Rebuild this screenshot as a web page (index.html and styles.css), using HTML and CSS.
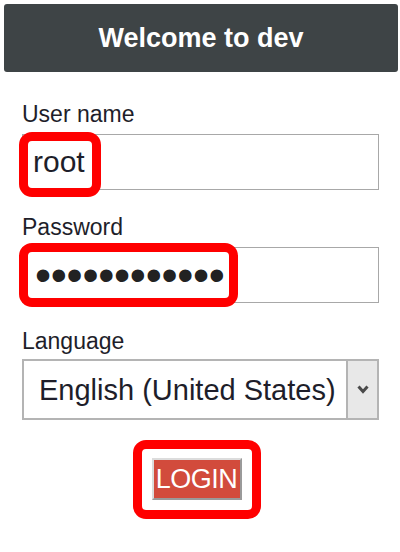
FILE: index.html
```html
<!DOCTYPE html>
<html>

<head>
    <meta charset="utf-8" />
    <title>Login</title>
    <link rel="stylesheet" href="styles.css">
</head>

<body>
    <div class="header">Welcome to dev</div>

    <form class="login">
        <div class="field field-user">
            <label for="user">User name</label>
            <div class="box">
                <input id="user" type="text" value="root">
                <span class="mark mark-user"></span>
            </div>
        </div>

        <div class="field field-pass">
            <label for="pass">Password</label>
            <div class="box">
                <input id="pass" class="pass" type="password" value="abcdefghijkl">
                <span class="mark mark-pass"></span>
            </div>
        </div>

        <div class="field field-lang">
            <label for="lang">Language</label>
            <div class="select">
                <select id="lang">
                    <option>English (United States)</option>
                </select>
                <span class="arrow">
                    <svg width="12" height="9" viewBox="0 0 12 9">
                        <polyline points="1.5,1.5 6,6.5 10.5,1.5" fill="none" stroke="#4a4a4a" stroke-width="3" />
                    </svg>
                </span>
            </div>
        </div>

        <div class="submit">
            <div class="mark-btn">
                <button type="button">LOGIN</button>
            </div>
        </div>
    </form>
</body>

</html>
```

FILE: styles.css
```css
body,
form,
label,
input,
select,
button {
    margin: 0;
    padding: 0;
}

body {
    background: #fff;
    font-family: "Liberation Sans", Arial, sans-serif;
    color: #1e1e2a;
}

.header {
    display: flex;
    align-items: center;
    justify-content: center;
    height: 68px;
    margin: 4px 2px 0 4px;
    background: #3e4446;
    border-radius: 3px;
    color: #fff;
    font-size: 27px;
    font-weight: bold;
}

.login {
    padding: 29px 21px 0 22px;
}

.field label {
    display: block;
    font-size: 23px;
    line-height: 26px;
    margin-bottom: 7px;
}

.field-user {
    margin-bottom: 24px;
}

.field-pass {
    margin-bottom: 25px;
}

.field-lang label {
    margin-bottom: 5px;
}

.box {
    position: relative;
}

.box input {
    display: block;
    box-sizing: border-box;
    width: 100%;
    height: 56px;
    border: 1px solid #a8a8a8;
    padding: 0 10px;
    font-family: "Liberation Sans", Arial, sans-serif;
    font-size: 30px;
    color: #1e1e2a;
    outline: none;
}

.box .pass {
    font-size: 46px;
    line-height: 60px;
    letter-spacing: -0.3px;
    padding-left: 12px;
    color: #222;
}

/* red highlight frames */
.mark {
    position: absolute;
    box-sizing: border-box;
    border: 9px solid #f00;
    border-radius: 13px;
    pointer-events: none;
}

.mark-user {
    left: -3px;
    top: -2px;
    width: 82px;
    height: 65px;
}

.mark-pass {
    left: -3px;
    top: -4px;
    width: 219px;
    height: 64px;
}

.select {
    display: flex;
    box-sizing: border-box;
    height: 61px;
    border: 2px solid #b4b4b4;
}

.select select {
    flex: 1;
    border: none;
    padding-left: 15px;
    background: #fff;
    font-family: "Liberation Sans", Arial, sans-serif;
    font-size: 29px;
    color: #1e1e2a;
    -webkit-appearance: none;
    appearance: none;
    outline: none;
}

.select .arrow {
    display: flex;
    align-items: center;
    justify-content: center;
    width: 29px;
    background: #e8e8e8;
    border-left: 2px solid #b4b4b4;
}

.submit {
    display: flex;
    justify-content: center;
    padding-right: 8px;
    margin-top: 20px;
}

.mark-btn {
    border: 9px solid #f00;
    border-radius: 13px;
    padding: 9px 10px 10px 10px;
}

.mark-btn button {
    display: block;
    box-sizing: border-box;
    width: 90px;
    height: 42px;
    background: #d24b3c;
    border: 2px solid;
    border-color: #dcdcdc #9a9a9a #9a9a9a #dcdcdc;
    color: #fff;
    font-family: "Liberation Sans", Arial, sans-serif;
    font-size: 27px;
    letter-spacing: -0.5px;
    cursor: pointer;
}
```
